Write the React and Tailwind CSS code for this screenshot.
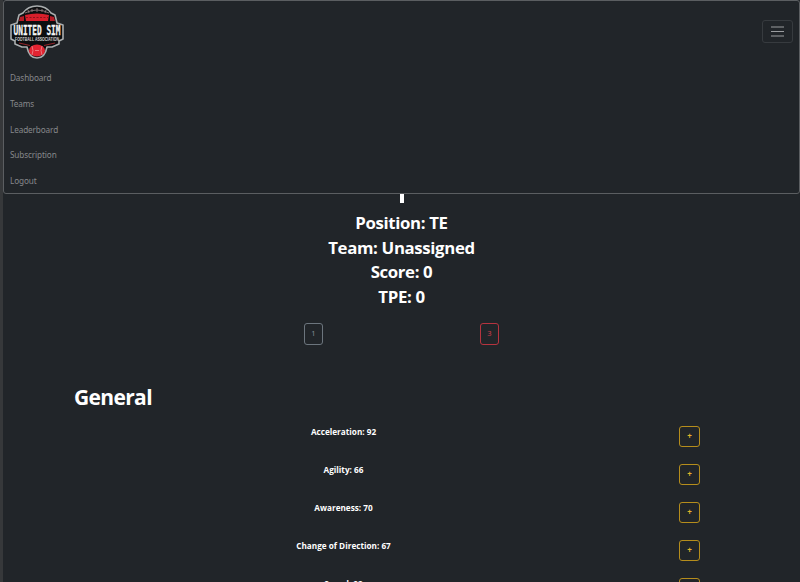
const links = ['Dashboard', 'Teams', 'Leaderboard', 'Subscription', 'Logout'];
const details = ['Position: TE', 'Team: Unassigned', 'Score: 0', 'TPE: 0'];
const skills = [
  'Acceleration: 92',
  'Agility: 66',
  'Awareness: 70',
  'Change of Direction: 67',
  'Speed: 82',
];

function Logo() {
  return (
    <svg width="54" height="54" viewBox="0 0 54 54" className="block">
      <path
        d="M13 8Q18 1 27 1T41 8L45 10L47 18L53 20V34L49 36V39L42 42H37Q35 53 27 53T17 42H12L5 39V36L1 34V20L7 18L9 10Z"
        fill="#0d0e10"
        stroke="#a9adae"
        strokeWidth="1.6"
        strokeLinejoin="round"
      />
      <path d="M15 8Q27 2 39 8M18 5L19 8M22 4V7M27 3V7M32 4V7M36 5L35 8" fill="none" stroke="#8b7879" strokeWidth="0.9" />
      <path d="M10 12L14 11V16H9ZM44 12L40 11V16H45Z" fill="#b51b26" />
      <path d="M15 10Q27 7 39 10L38 16H16Z" fill="#d91f2b" />
      <path d="M16 12.5H38" stroke="#8f131c" strokeWidth="1" strokeDasharray="2 1.5" />
      <path d="M9 38L20 40.5M45 38L34 40.5" stroke="#8f252b" strokeWidth="1.2" />
      <text x="27" y="29.5" textAnchor="middle" textLength="47" lengthAdjust="spacingAndGlyphs" fontFamily="DejaVu Sans Mono, monospace" fontWeight="700" fontSize="14" fill="#f4f4f4" stroke="#f4f4f4" strokeWidth="0.3">
        UNITED SIM
      </text>
      <text x="27" y="35.5" textAnchor="middle" textLength="44" lengthAdjust="spacingAndGlyphs" fontFamily="Liberation Sans, sans-serif" fontWeight="700" fontSize="4.5" fill="#d2d2d2">
        FOOTBALL ASSOCIATION
      </text>
      <ellipse cx="27" cy="45.5" rx="8" ry="6" fill="#e32431" />
      <path d="M22 41Q24 45.5 22 50M32 41Q30 45.5 32 50M25 45.5H29" fill="none" stroke="#f08a90" strokeWidth="0.8" />
    </svg>
  );
}

function Navbar() {
  return (
    <nav className="absolute left-0 top-0 flex h-[194px] w-[797px] flex-col rounded-[3px] border border-[#5b5e61] bg-[#212529]">
      <div className="flex h-[64px] shrink-0 items-start justify-between pl-[6px] pr-[6px] pt-[4px]">
        <Logo />
        <button className="mt-[15px] flex h-[23px] w-[31px] items-center justify-center rounded-[3px] border border-[#373b3f]">
          <svg width="13" height="11" viewBox="0 0 13 11">
            <path d="M0 1H13M0 5.5H13M0 10H13" stroke="#9b9da0" strokeWidth="1.1" />
          </svg>
        </button>
      </div>
      <ul className="flex flex-col pl-[6px] pt-[0.5px] text-[8.2px] tracking-[-0.12px] text-[#86888b]">
        {links.map((link) => (
          <li key={link} className="flex h-[25.7px] items-center whitespace-nowrap">
            {link}
          </li>
        ))}
      </ul>
    </nav>
  );
}

export default function App() {
  return (
    <div className="relative h-[582px] w-[800px] overflow-hidden border-l-[3px] border-[#36383a] bg-[#212529] font-['Noto_Sans','Open_Sans',sans-serif] text-white">
      <Navbar />
      <main className="flex flex-col pt-[181px]">
        <h1 className="flex h-[30px] items-start justify-center pt-[2px]">
          <span className="block h-[20px] w-[4px] bg-white" />
        </h1>
        <div className="flex flex-col items-center font-['Open_Sans'] text-[16.8px] font-bold leading-[24.7px] tracking-[-0.35px]">
          {details.map((detail) => (
            <div key={detail}>{detail}</div>
          ))}
        </div>
        <div className="mt-[13px] flex pl-[301px]">
          <button className="flex h-[22px] w-[19px] items-center justify-center rounded-[3px] border border-[#6c757d] text-[7.5px] text-[#858c92]">
            1
          </button>
          <button className="ml-[157px] flex h-[22px] w-[19px] items-center justify-center rounded-[3px] border border-[#b5343f] text-[7.5px] text-[#d13d4a]">
            3
          </button>
        </div>
        <h2 className="mt-[37px] pl-[71px] font-['Open_Sans'] text-[21px] font-bold leading-[30px] tracking-[-0.65px]">General</h2>
        <div className="mt-[14px] flex flex-col">
          {skills.map((skill) => (
            <div key={skill} className="flex h-[38px] shrink-0">
              <div className="ml-[72px] w-[537px] text-center font-['Open_Sans'] text-[8.2px] font-bold leading-[12px]">{skill}</div>
              <button className="ml-[67px] flex h-[21px] w-[21px] items-center justify-center rounded-[3px] border border-[#b58d1c] text-[8px] font-bold text-[#e4b52b]">
                +
              </button>
            </div>
          ))}
        </div>
      </main>
    </div>
  );
}
